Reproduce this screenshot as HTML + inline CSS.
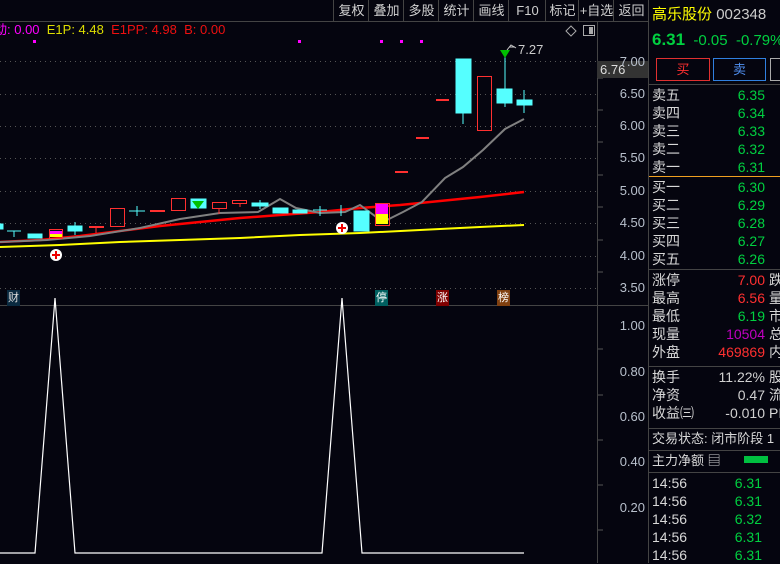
<!DOCTYPE html>
<html><head><meta charset="utf-8"><style>
body{margin:0;width:780px;height:563px;background:#05050f;overflow:hidden;position:relative;font-family:"Liberation Sans","Noto Sans CJK SC",sans-serif;font-size:13px;color:#c8c8c8}
.a{position:absolute;white-space:nowrap;line-height:16px}
.tb{position:absolute;top:0;height:21px;line-height:21px;text-align:center;color:#d0d0d0;font-size:13px;border-left:1px solid #444}
.ax{position:absolute;left:600px;width:45px;text-align:right;color:#b8c0cc;font-size:13px;line-height:14px}
.g{color:#00d040}.r{color:#ff3030}.w{color:#d0d0d0}
.rl{position:absolute;left:652px;line-height:18px;font-size:14px;color:#d8d8d8}
.rv{position:absolute;width:115px;left:650px;text-align:right;line-height:18px;font-size:14px}
.hl{position:absolute;left:649px;width:131px;height:1px;background:#444}
</style></head><body>
<svg width="780" height="563" style="position:absolute;left:0;top:0">
<g stroke="#555" stroke-dasharray="1,4" stroke-width="1">
<line x1="0" y1="61.5" x2="597" y2="61.5"/><line x1="0" y1="94.5" x2="597" y2="94.5"/><line x1="0" y1="126.5" x2="597" y2="126.5"/><line x1="0" y1="158.5" x2="597" y2="158.5"/><line x1="0" y1="191.5" x2="597" y2="191.5"/><line x1="0" y1="223.5" x2="597" y2="223.5"/><line x1="0" y1="256.5" x2="597" y2="256.5"/><line x1="0" y1="288.5" x2="597" y2="288.5"/>
</g>
<line x1="0" y1="21.5" x2="648" y2="21.5" stroke="#444"/>
<line x1="0" y1="305.5" x2="648" y2="305.5" stroke="#444"/>
<line x1="597.5" y1="22" x2="597.5" y2="563" stroke="#444"/>
<line x1="648.5" y1="0" x2="648.5" y2="563" stroke="#444"/>
<g stroke="#555"><line x1="598" y1="78" x2="603" y2="78"/><line x1="598" y1="110" x2="603" y2="110"/><line x1="598" y1="142" x2="603" y2="142"/><line x1="598" y1="175" x2="603" y2="175"/><line x1="598" y1="207" x2="603" y2="207"/><line x1="598" y1="240" x2="603" y2="240"/><line x1="598" y1="272" x2="603" y2="272"/><line x1="598" y1="349" x2="603" y2="349"/><line x1="598" y1="395" x2="603" y2="395"/><line x1="598" y1="440" x2="603" y2="440"/><line x1="598" y1="485" x2="603" y2="485"/><line x1="598" y1="530" x2="603" y2="530"/></g>
<g fill="#ff00ff"><rect x="33" y="40" width="3" height="3"/><rect x="298" y="40" width="3" height="3"/><rect x="380" y="40" width="3" height="3"/><rect x="400" y="40" width="3" height="3"/><rect x="420" y="40" width="3" height="3"/></g>
<polyline fill="none" stroke="#ffff00" stroke-width="2" points="0,247 60,245 120,242 180,240 240,238 300,235 360,233 420,230 480,227 524,225"/>
<polyline fill="none" stroke="#ff0000" stroke-width="2.5" points="0,242 40,240 80,236 120,231 160,226 200,222 240,218 280,215 320,212 360,208 400,205 440,201 480,197 524,192"/>
<polyline fill="none" stroke="#808080" stroke-width="2" points="0,242 47,240 90,236 140,228 180,219 220,213 258,212 280,199 296,208 320,213 345,212 360,205 383,222 403,212 422,202 445,178 463,167 483,150 505,129 524,119"/>
<g stroke="#55ffff" fill="#55ffff">
<rect x="0" y="224" width="3" height="5"/><line x1="7" y1="231" x2="21" y2="231"/><line x1="14" y1="231" x2="14" y2="237"/>
<rect x="28" y="234" width="14" height="4"/>
<rect x="68" y="226" width="14" height="5"/><line x1="75" y1="222" x2="75" y2="235"/>
<line x1="129" y1="211" x2="145" y2="211"/><line x1="137" y1="206" x2="137" y2="216"/>
<rect x="191" y="199" width="15" height="9"/>
<rect x="252" y="203" width="16" height="3"/><line x1="260" y1="200" x2="260" y2="209"/>
<rect x="273" y="208" width="15" height="5"/><rect x="293" y="210" width="14" height="3"/>
<line x1="313" y1="210" x2="327" y2="210"/><line x1="320" y1="206" x2="320" y2="216"/><line x1="341" y1="205" x2="341" y2="216"/>
<rect x="354" y="211" width="15" height="20"/>
<rect x="456" y="59" width="15" height="54"/><line x1="463" y1="113" x2="463" y2="124"/>
<rect x="497" y="89" width="15" height="14"/><line x1="505" y1="57" x2="505" y2="107"/>
<rect x="517" y="100" width="15" height="5"/><line x1="524" y1="90" x2="524" y2="113"/>
</g>
<g stroke="#ff3030" fill="none">
<rect x="49.5" y="229.5" width="13" height="9"/><line x1="89" y1="227" x2="104" y2="227" stroke-width="2"/><line x1="96" y1="227" x2="96" y2="233"/>
<rect x="110.5" y="208.5" width="14" height="18"/><line x1="150" y1="211" x2="165" y2="211" stroke-width="2"/>
<rect x="171.5" y="198.5" width="14" height="12"/><rect x="212.5" y="202.5" width="14" height="6"/><line x1="219" y1="209" x2="219" y2="214"/>
<rect x="232.5" y="200.5" width="14" height="3"/><line x1="240" y1="204" x2="240" y2="207"/>
<rect x="375.5" y="203.5" width="14" height="22"/>
<line x1="395" y1="172" x2="408" y2="172" stroke-width="2"/><line x1="416" y1="138" x2="429" y2="138" stroke-width="2"/><line x1="436" y1="100" x2="449" y2="100" stroke-width="2"/>
<rect x="477.5" y="76.5" width="14" height="54"/>
</g>
<rect x="50" y="231" width="12" height="3" fill="#ff00ff"/><rect x="50" y="234" width="12" height="3" fill="#ffff00"/>
<rect x="376" y="204" width="12" height="10" fill="#ff00ff"/><rect x="376" y="214" width="12" height="10" fill="#ffff00"/>
<polygon points="192,201 204,201 198,209" fill="#00c000"/><polygon points="500,50 510,50 505,58" fill="#00c000"/>
<circle cx="56" cy="255" r="6" fill="#fff"/><path d="M52 255h8M56 251v8" stroke="#e00" stroke-width="2"/>
<circle cx="342" cy="228" r="6" fill="#fff"/><path d="M338 228h8M342 224v8" stroke="#e00" stroke-width="2"/>
<path d="M507 50 l4 -5 l5 3 M509 47 h6" stroke="#ccc" fill="none"/>
<polygon points="571,26 576,31 571,36 566,31" fill="none" stroke="#aaa"/>
<rect x="583.5" y="25.5" width="11" height="10" fill="none" stroke="#aaa"/><rect x="589" y="27" width="4" height="7" fill="#aaa"/>
<polyline fill="none" stroke="#fff" stroke-width="1.2" points="0,553 35,553 55,298 75,553 322,553 342,298 362,553 524,553"/>
<rect x="744" y="456" width="24" height="7" fill="#00c040"/>
<rect x="597" y="61" width="51" height="17" fill="#333"/>
</svg>
<div class="a" style="left:-6px;top:22px;font-size:13px"><span style="color:#ff00ff">动: 0.00</span>&nbsp; <span style="color:#dddd00">E1P: 4.48</span>&nbsp; <span style="color:#ee1010">E1PP: 4.98&nbsp; B: 0.00</span></div>
<div class="tb" style="left:333px;width:35px">复权</div><div class="tb" style="left:368px;width:35px">叠加</div><div class="tb" style="left:403px;width:35px">多股</div><div class="tb" style="left:438px;width:35px">统计</div><div class="tb" style="left:473px;width:35px">画线</div><div class="tb" style="left:508px;width:37px">F10</div><div class="tb" style="left:545px;width:33px">标记</div><div class="tb" style="left:578px;width:35px">+自选</div><div class="tb" style="left:613px;width:35px">返回</div>
<div class="a" style="left:518px;top:42px;color:#ccc">7.27</div>
<div class="a" style="left:600px;top:62px;color:#ddd">6.76</div>
<div class="ax" style="top:55px">7.00</div><div class="ax" style="top:87px">6.50</div><div class="ax" style="top:119px">6.00</div><div class="ax" style="top:151px">5.50</div><div class="ax" style="top:184px">5.00</div><div class="ax" style="top:216px">4.50</div><div class="ax" style="top:249px">4.00</div><div class="ax" style="top:281px">3.50</div>
<div class="ax" style="top:319px">1.00</div><div class="ax" style="top:365px">0.80</div><div class="ax" style="top:410px">0.60</div><div class="ax" style="top:455px">0.40</div><div class="ax" style="top:501px">0.20</div>
<div class="a" style="left:7px;top:290px;font-size:11px;background:#0a2a40;color:#ddd;padding:0 1px">财</div>
<div class="a" style="left:375px;top:290px;font-size:11px;background:#006060;color:#fff;padding:0 1px">停</div>
<div class="a" style="left:436px;top:290px;font-size:11px;background:#800000;color:#fff;padding:0 1px">涨</div>
<div class="a" style="left:497px;top:290px;font-size:11px;background:#804010;color:#fff;padding:0 1px">榜</div>
<div class="a" style="left:652px;top:6px;font-size:15px;line-height:18px"><span style="color:#ffff00">高乐股份</span> <span style="color:#ccc">002348</span></div>
<div class="a" style="left:652px;top:31px;font-size:15px;line-height:18px;color:#00d040"><b style="font-size:17px">6.31</b>&nbsp; -0.05&nbsp; -0.79%</div>
<div class="a" style="left:656px;top:58px;width:52px;height:21px;border:1px solid #e03030;color:#ff3030;text-align:center;line-height:21px">买</div>
<div class="a" style="left:713px;top:58px;width:51px;height:21px;border:1px solid #3080e0;color:#5090f0;text-align:center;line-height:21px">卖</div>
<div class="a" style="left:770px;top:58px;width:12px;height:21px;border:1px solid #aaa"></div>
<div class="hl" style="top:84px"></div>
<div class="rl" style="top:86px">卖五<br>卖四<br>卖三<br>卖二<br>卖一</div>
<div class="rv g" style="top:86px">6.35<br>6.34<br>6.33<br>6.32<br>6.31</div>
<div class="hl" style="top:176px;background:#f0a020"></div>
<div class="rl" style="top:178px">买一<br>买二<br>买三<br>买四<br>买五</div>
<div class="rv g" style="top:178px">6.30<br>6.29<br>6.28<br>6.27<br>6.26</div>
<div class="hl" style="top:269px"></div>
<div class="rl" style="top:271px">涨停<br>最高<br>最低<br>现量<br>外盘</div>
<div class="rv" style="top:271px"><span class="r">7.00</span><br><span class="r">6.56</span><br><span class="g">6.19</span><br><span style="color:#c000c0">10504</span><br><span class="r">469869</span></div>
<div class="rl" style="left:769px;top:271px">跌<br>量<br>市<br>总<br>内</div>
<div class="hl" style="top:366px"></div>
<div class="rl" style="top:368px">换手<br>净资<br>收益㈢</div>
<div class="rv w" style="top:368px">11.22%<br>0.47<br>-0.010</div>
<div class="rl" style="left:769px;top:368px">股<br>流<br>PI</div>
<div class="hl" style="top:428px"></div>
<div class="rl" style="top:430px;font-size:13px">交易状态: 闭市阶段 1</div>
<div class="hl" style="top:450px"></div>
<div class="rl" style="top:452px;font-size:13px">主力净额 ▤</div>
<div class="hl" style="top:472px"></div>
<div class="rl" style="top:474px">14:56<br>14:56<br>14:56<br>14:56<br>14:56</div>
<div class="rv g" style="top:474px;width:112px">6.31<br>6.31<br>6.32<br>6.31<br>6.31</div>
</body></html>
